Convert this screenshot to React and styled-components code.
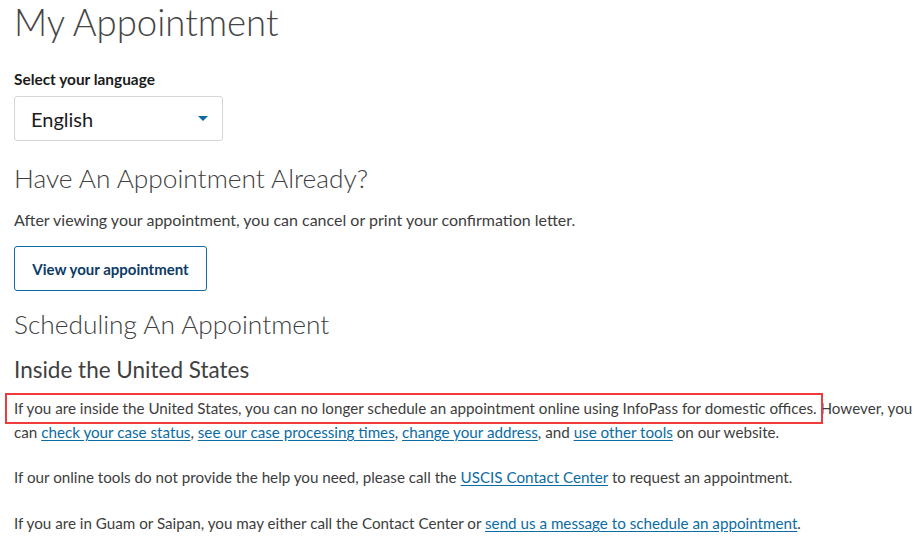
import React from "react";
import styled, { createGlobalStyle } from "styled-components";

const GlobalStyle = createGlobalStyle`
  html, body {
    margin: 0;
    padding: 0;
    background: #ffffff;
  }
  body {
    font-family: Lato, "Noto Sans", "Liberation Sans", sans-serif;
    color: #3d3d3d;
    overflow: hidden;
  }
`;

const Page = styled.div`
  width: 920px;
  height: 536px;
  padding: 0 14px;
  box-sizing: border-box;
  display: flex;
  flex-direction: column;
  position: relative;
`;

const Title = styled.h1`
  margin: 0;
  font-size: 36.5px;
  font-weight: 300;
  line-height: 44px;
  color: #454545;
`;

const Label = styled.label`
  margin-top: 25px;
  font-size: 15.4px;
  font-weight: 700;
  line-height: 20px;
  color: #1b1b1b;
`;

const SelectBox = styled.div`
  margin-top: 7px;
  width: 209px;
  height: 45px;
  box-sizing: border-box;
  border: 1px solid #d6d6d6;
  border-radius: 3px;
  display: flex;
  align-items: center;
  justify-content: space-between;
  padding: 0 14px 0 16px;
  font-size: 20px;
  color: #1b1b1b;
`;

const Caret = styled.span`
  width: 0;
  height: 0;
  border-left: 5px solid transparent;
  border-right: 5px solid transparent;
  border-top: 5px solid #0b6ba4;
`;

const Heading = styled.h2`
  margin: ${(p) => p.$top}px 0 0;
  font-size: 26.3px;
  font-weight: 300;
  line-height: 32px;
  color: #404040;
`;

const SubHeading = styled.h3`
  margin: 16px 0 0;
  font-size: 22.5px;
  font-weight: 400;
  line-height: 28px;
  color: #404040;
`;

const Text = styled.p`
  margin: ${(p) => p.$top}px 0 0;
  font-size: ${(p) => p.$size || 15.2}px;
  line-height: 24px;
  white-space: nowrap;
  color: #3d3d3d;
`;

const OutlineButton = styled.button`
  margin-top: 14px;
  align-self: flex-start;
  width: 193px;
  height: 45px;
  background: #ffffff;
  border: 1px solid #0b6ba4;
  border-radius: 3px;
  font-family: inherit;
  font-size: 15px;
  font-weight: 700;
  color: #0d3b66;
  cursor: pointer;
`;

const Link = styled.a`
  color: #0b6ba4;
  text-decoration: underline;
  text-underline-offset: 2px;
`;

const Highlight = styled.div`
  position: absolute;
  left: 5px;
  top: 393px;
  width: 818px;
  height: 31px;
  box-sizing: border-box;
  border: 2px solid #ef3b3b;
  pointer-events: none;
`;

export default function App() {
  return (
    <>
      <GlobalStyle />
      <Page>
        <Title>My Appointment</Title>
        <Label>Select your language</Label>
        <SelectBox>
          <span>English</span>
          <Caret />
        </SelectBox>
        <Heading $top={21}>Have An Appointment Already?</Heading>
        <Text $top={14} $size={16}>
          After viewing your appointment, you can cancel or print your
          confirmation letter.
        </Text>
        <OutlineButton>View your appointment</OutlineButton>
        <Heading $top={17}>Scheduling An Appointment</Heading>
        <SubHeading>Inside the United States</SubHeading>
        <Text $top={12}>
          If you are inside the United States, you can no longer schedule an
          appointment online using InfoPass for domestic offices. However, you
          <br />
          can <Link href="#">check your case status</Link>,{" "}
          <Link href="#">see our case processing times</Link>,{" "}
          <Link href="#">change your address</Link>, and{" "}
          <Link href="#">use other tools</Link> on our website.
        </Text>
        <Text $top={21}>
          If our online tools do not provide the help you need, please call the{" "}
          <Link href="#">USCIS Contact Center</Link> to request an appointment.
        </Text>
        <Text $top={22}>
          If you are in Guam or Saipan, you may either call the Contact Center
          or <Link href="#">send us a message to schedule an appointment</Link>.
        </Text>
        <Highlight />
      </Page>
    </>
  );
}
